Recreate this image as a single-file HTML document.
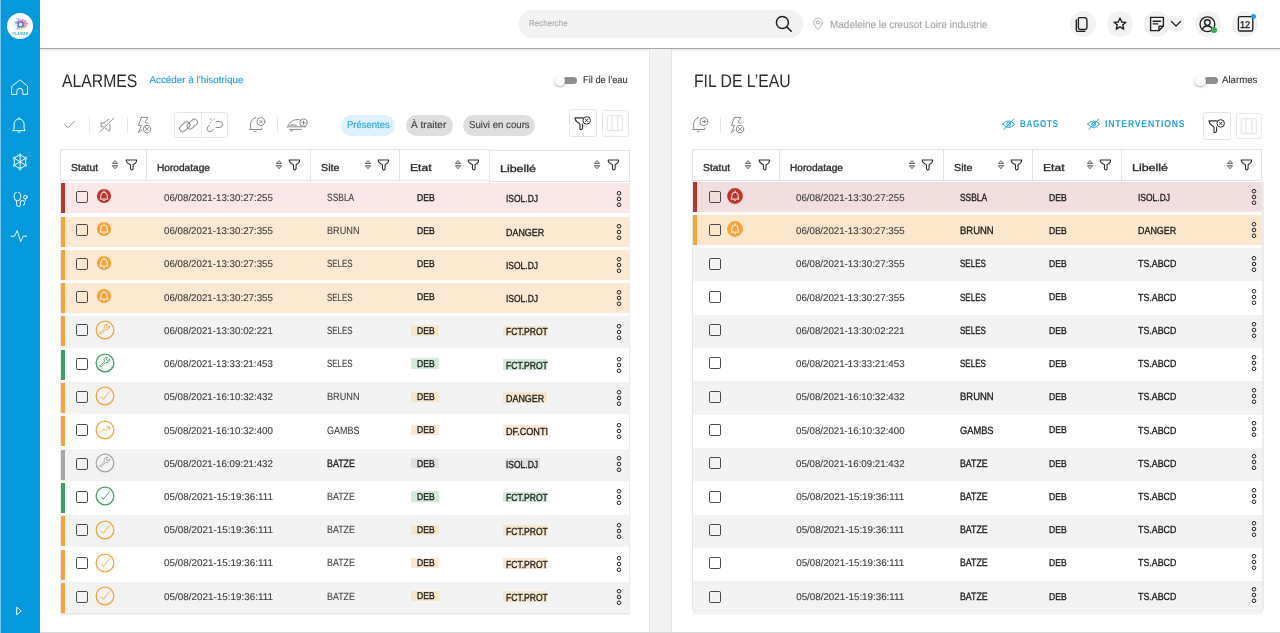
<!DOCTYPE html><html><head><meta charset="utf-8"><style>
*{box-sizing:border-box;margin:0;padding:0}
html,body{width:1280px;height:633px;overflow:hidden;background:#fff;font-family:"Liberation Sans", sans-serif;position:relative}
body{will-change:transform}
.a{position:absolute}
.t{position:absolute;white-space:nowrap;line-height:1;text-rendering:geometricPrecision}
</style></head><body><div class="a" style="left:0.00px;top:0.00px;width:40.40px;height:633.00px;background:#0598da;"></div>
<div class="a" style="left:0.00px;top:0.00px;width:1.00px;height:633.00px;background:#6cc6f0;"></div>
<div class="a" style="left:7.1px;top:13.1px;width:26px;height:26px;border-radius:50%;background:#fff"></div>
<svg class="a" style="left:7px;top:13px" width="26" height="26" viewBox="0 0 26 26"><circle cx="8.07" cy="12.03" r="0.56" fill="#c4c9f2"/><circle cx="11.48" cy="8.64" r="0.57" fill="#7d8ad8"/><circle cx="9.94" cy="10.37" r="0.51" fill="#c4c9f2"/><circle cx="10.81" cy="16.60" r="0.62" fill="#a6c8ee"/><circle cx="8.95" cy="10.32" r="0.63" fill="#c4c9f2"/><circle cx="10.07" cy="10.40" r="0.69" fill="#9aa3e6"/><circle cx="12.51" cy="13.93" r="0.61" fill="#b3b9ee"/><circle cx="10.39" cy="8.72" r="0.69" fill="#7d8ad8"/><circle cx="7.66" cy="11.13" r="0.40" fill="#c4c9f2"/><circle cx="11.19" cy="16.08" r="0.75" fill="#c4c9f2"/><circle cx="12.33" cy="5.67" r="0.49" fill="#a6c8ee"/><circle cx="9.57" cy="8.39" r="0.42" fill="#9aa3e6"/><circle cx="10.04" cy="8.61" r="0.54" fill="#8591dd"/><circle cx="11.62" cy="5.78" r="0.47" fill="#9aa3e6"/><circle cx="12.40" cy="8.84" r="0.74" fill="#c4c9f2"/><circle cx="10.40" cy="12.20" r="0.47" fill="#a6c8ee"/><circle cx="9.58" cy="9.59" r="0.52" fill="#8591dd"/><circle cx="11.84" cy="6.09" r="0.45" fill="#9aa3e6"/><circle cx="11.05" cy="9.98" r="0.68" fill="#c4c9f2"/><circle cx="10.14" cy="15.11" r="0.58" fill="#c4c9f2"/><circle cx="12.20" cy="5.97" r="0.63" fill="#c4c9f2"/><circle cx="11.23" cy="15.08" r="0.40" fill="#b3b9ee"/><circle cx="9.67" cy="5.99" r="0.51" fill="#7d8ad8"/><circle cx="11.71" cy="8.43" r="0.75" fill="#c4c9f2"/><circle cx="8.17" cy="10.05" r="0.75" fill="#9aa3e6"/><circle cx="10.68" cy="13.96" r="0.52" fill="#7d8ad8"/><circle cx="10.79" cy="12.93" r="0.47" fill="#9aa3e6"/><circle cx="10.75" cy="10.43" r="0.53" fill="#8591dd"/><circle cx="6.25" cy="12.22" r="0.69" fill="#c4c9f2"/><circle cx="11.09" cy="14.85" r="0.45" fill="#a6c8ee"/><circle cx="10.78" cy="6.18" r="0.65" fill="#b3b9ee"/><circle cx="10.19" cy="15.49" r="0.47" fill="#7d8ad8"/><circle cx="11.42" cy="5.69" r="0.43" fill="#7d8ad8"/><circle cx="12.54" cy="14.24" r="0.74" fill="#7d8ad8"/><circle cx="8.95" cy="14.94" r="0.55" fill="#8591dd"/><circle cx="11.36" cy="7.36" r="0.46" fill="#7d8ad8"/><circle cx="10.89" cy="9.77" r="0.57" fill="#b3b9ee"/><circle cx="8.29" cy="9.34" r="0.50" fill="#9aa3e6"/><circle cx="12.05" cy="8.32" r="0.42" fill="#9aa3e6"/><circle cx="9.58" cy="12.26" r="0.46" fill="#9aa3e6"/><circle cx="8.34" cy="13.12" r="0.43" fill="#b3b9ee"/><circle cx="10.90" cy="15.05" r="0.63" fill="#8591dd"/><circle cx="8.70" cy="8.94" r="0.61" fill="#b3b9ee"/><circle cx="11.64" cy="7.32" r="0.65" fill="#8591dd"/><circle cx="12.75" cy="8.87" r="0.43" fill="#a6c8ee"/><circle cx="12.03" cy="14.92" r="0.75" fill="#b3b9ee"/><circle cx="15.58" cy="7.25" r="1.36" fill="#f27bbd" opacity="0.72"/><circle cx="15.13" cy="8.28" r="1.15" fill="#f27bbd" opacity="0.72"/><circle cx="14.69" cy="9.32" r="0.94" fill="#f27bbd" opacity="0.72"/><circle cx="18.09" cy="8.34" r="1.27" fill="#f06aa0" opacity="0.72"/><circle cx="17.09" cy="9.05" r="1.06" fill="#f06aa0" opacity="0.72"/><circle cx="16.10" cy="9.76" r="0.85" fill="#f06aa0" opacity="0.72"/><circle cx="19.51" cy="10.54" r="1.27" fill="#ef5f6a" opacity="0.72"/><circle cx="18.23" cy="10.74" r="1.06" fill="#ef5f6a" opacity="0.72"/><circle cx="16.95" cy="10.93" r="0.85" fill="#ef5f6a" opacity="0.72"/><circle cx="18.87" cy="12.97" r="1.10" fill="#f27a5a" opacity="0.72"/><circle cx="17.65" cy="12.59" r="0.89" fill="#f27a5a" opacity="0.72"/><circle cx="16.43" cy="12.21" r="0.68" fill="#f27a5a" opacity="0.72"/><circle cx="17.34" cy="14.41" r="1.10" fill="#3fc0ec" opacity="0.72"/><circle cx="16.42" cy="13.62" r="0.89" fill="#3fc0ec" opacity="0.72"/><circle cx="15.50" cy="12.84" r="0.68" fill="#3fc0ec" opacity="0.72"/><circle cx="15.09" cy="15.51" r="1.19" fill="#f5d53a" opacity="0.72"/><circle cx="14.76" cy="14.44" r="0.98" fill="#f5d53a" opacity="0.72"/><circle cx="14.42" cy="13.37" r="0.76" fill="#f5d53a" opacity="0.72"/><circle cx="13.00" cy="15.25" r="0.94" fill="#f6e05c" opacity="0.72"/><circle cx="13.23" cy="14.16" r="0.72" fill="#f6e05c" opacity="0.72"/><circle cx="13.45" cy="13.07" r="0.51" fill="#f6e05c" opacity="0.72"/><circle cx="13.38" cy="7.34" r="1.02" fill="#e987d0" opacity="0.72"/><circle cx="13.49" cy="8.44" r="0.81" fill="#e987d0" opacity="0.72"/><circle cx="13.61" cy="9.54" r="0.59" fill="#e987d0" opacity="0.72"/><circle cx="13.6" cy="11.4" r="2.6" fill="#d8ecfb" stroke="#4a63d0" stroke-width="1.2"/><text x="13.3" y="21.7" font-family="Liberation Sans" font-weight="700" font-size="3.9" fill="#41b3e8" text-anchor="middle" textLength="15.6" lengthAdjust="spacingAndGlyphs">PLASMA</text></svg>
<svg class="a" style="left:10px;top:77px" width="20" height="20" viewBox="0 0 20 20"><path d="M2 9.2 L9.8 2.9 L17.6 9.2 V17.4 H12.8 V14.3 A3 3 0 0 0 6.8 14.3 V17.4 H2 Z" stroke="#fff" stroke-width="0.95" fill="none" stroke-linejoin="round" stroke-linecap="round"/></svg>
<svg class="a" style="left:11px;top:115px" width="18" height="19" viewBox="0 0 18 19"><path d="M2 15.6 H14.2 L13.1 13.9 V9.3 A5 5.4 0 0 0 3.1 9.3 V13.9 Z" stroke="#fff" stroke-width="0.95" fill="none" stroke-linejoin="round" stroke-linecap="round"/><path d="M8.1 2.5 V3.9" stroke="#fff" stroke-width="0.95" fill="none" stroke-linejoin="round" stroke-linecap="round"/><path d="M6.9 17 Q8.1 18.2 9.3 17" stroke="#fff" stroke-width="0.95" fill="none" stroke-linejoin="round" stroke-linecap="round"/></svg>
<svg class="a" style="left:12px;top:152px" width="17" height="20" viewBox="0 0 17 20"><path d="M8.15 3.10 L13.70 6.10 L13.70 13.40 L8.15 16.80 L2.30 13.40 L2.30 6.10 Z" stroke="#fff" stroke-width="0.95" fill="none" stroke-linejoin="round" stroke-linecap="round"/><path d="M8.15 3.1 L8.15 16.8 M2.3 6.1 L13.7 13.4 M13.7 6.1 L2.3 13.4" stroke="#fff" stroke-width="0.95" fill="none" stroke-linejoin="round" stroke-linecap="round"/><circle cx="8.15" cy="3.1" r="1.05" fill="#0598da" stroke="#fff" stroke-width="0.85"/><circle cx="13.7" cy="6.1" r="1.05" fill="#0598da" stroke="#fff" stroke-width="0.85"/><circle cx="13.7" cy="13.4" r="1.05" fill="#0598da" stroke="#fff" stroke-width="0.85"/><circle cx="8.15" cy="16.8" r="1.05" fill="#0598da" stroke="#fff" stroke-width="0.85"/><circle cx="2.3" cy="13.4" r="1.05" fill="#0598da" stroke="#fff" stroke-width="0.85"/><circle cx="2.3" cy="6.1" r="1.05" fill="#0598da" stroke="#fff" stroke-width="0.85"/><circle cx="8.15" cy="9.75" r="0.9" fill="#fff"/></svg>
<svg class="a" style="left:12px;top:190px" width="17" height="18" viewBox="0 0 17 18"><path d="M4.4 2.4 Q2.2 2.8 2.2 5.4 V7.6 Q2.2 10.8 5.5 10.8 Q8.6 10.8 8.6 7.6 V5.4 Q8.6 2.8 6.6 2.4" stroke="#fff" stroke-width="0.95" fill="none" stroke-linejoin="round" stroke-linecap="round"/><path d="M4.6 10.8 V14.6 Q4.6 16.6 6.6 16.6 Q8.4 16.6 8.4 14.6 V12 Q8.4 10.4 10.4 10.4 Q12.6 10.4 12.6 12.6 V13.5 Q12.6 15.2 11.3 15.2" stroke="#fff" stroke-width="0.95" fill="none" stroke-linejoin="round" stroke-linecap="round"/><circle cx="13.4" cy="7.2" r="1.8" stroke="#fff" stroke-width="0.95" fill="none" stroke-linejoin="round" stroke-linecap="round"/><path d="M13.4 9 V10.5" stroke="#fff" stroke-width="0.95" fill="none" stroke-linejoin="round" stroke-linecap="round"/></svg>
<svg class="a" style="left:10px;top:229px" width="18" height="14" viewBox="0 0 18 14"><path d="M1 7.2 H4.6 L7.2 1.6 L10.6 12.6 L13.2 7.2 H16.6" stroke="#fff" stroke-width="0.95" fill="none" stroke-linejoin="round" stroke-linecap="round"/></svg>
<svg class="a" style="left:14px;top:605px" width="10" height="12" viewBox="0 0 10 12"><path d="M3 2.4 L7.3 6 L3 9.6 Z" stroke="#fff" stroke-width="0.95" fill="none" stroke-linejoin="round" stroke-linecap="round"/></svg>
<div class="a" style="left:40.00px;top:48.00px;width:1240.00px;height:1.00px;background:#a5a5a5;"></div>
<div class="a" style="left:40.00px;top:49.00px;width:1240.00px;height:3.00px;background:linear-gradient(rgba(0,0,0,0.09),rgba(0,0,0,0));"></div>
<div class="a" style="left:518.5px;top:10.2px;width:284.5px;height:27.3px;border-radius:13.6px;background:#f3f3f3;box-shadow:0 0.5px 1px rgba(0,0,0,0.10)"></div>
<div class="t" style="left:529.30px;top:19.00px;font-size:8.6px;color:#a9a9a9;-webkit-text-stroke:0.12px #a9a9a9;transform:scaleX(0.9335);transform-origin:0 0;">Recherche</div>
<svg class="a" style="left:774px;top:14px" width="20" height="20" viewBox="0 0 20 20"><circle cx="8.4" cy="8.4" r="6.0" fill="none" stroke="#1e1e1e" stroke-width="1.45"/><path d="M12.7 12.7 L17.2 17.2" stroke="#1e1e1e" stroke-width="1.6" stroke-linecap="round"/></svg>
<svg class="a" style="left:812px;top:17px" width="12" height="14" viewBox="0 0 12 14"><path d="M6 12.6 C3 9.2 1.8 7.3 1.8 5.3 A4.2 4.2 0 0 1 10.2 5.3 C10.2 7.3 9 9.2 6 12.6 Z" fill="none" stroke="#adadad" stroke-width="0.95"/><circle cx="6" cy="5.3" r="1.7" fill="none" stroke="#adadad" stroke-width="0.95"/></svg>
<div class="t" style="left:830.00px;top:20.00px;font-size:10.6px;color:#a6a6a6;-webkit-text-stroke:0.12px #a6a6a6;transform:scaleX(0.9412);transform-origin:0 0;">Madeleine le creusot Loire industrie</div>
<div class="a" style="left:1069.8px;top:11px;width:26px;height:26px;border-radius:50%;background:#f2f2f2"></div>
<div class="a" style="left:1107.2px;top:11px;width:26px;height:26px;border-radius:50%;background:#f2f2f2"></div>
<div class="a" style="left:1144.3px;top:11px;width:26px;height:26px;border-radius:50%;background:#f2f2f2"></div>
<div class="a" style="left:1194.5px;top:11px;width:26px;height:26px;border-radius:50%;background:#f2f2f2"></div>
<div class="a" style="left:1231.8px;top:11px;width:26px;height:26px;border-radius:50%;background:#f2f2f2"></div>
<div class="a" style="left:1167.5px;top:15.5px;width:16px;height:16px;border-radius:50%;background:#f2f2f2"></div>
<svg class="a" style="left:1073px;top:15px" width="19" height="18" viewBox="0 0 19 18"><path d="M6 2.6 H11.4 Q13.9 2.6 13.9 5.1 V12.8 Q13.9 14.5 12.2 14.5 H7 Q5.4 14.5 5.4 12.8 V3.2" stroke="#1e1e1e" stroke-width="1.35" fill="none" stroke-linejoin="round" stroke-linecap="round"/><path d="M3.3 5 V14.9 Q3.3 16.4 4.8 16.4 H11.8" stroke="#1e1e1e" stroke-width="1.35" fill="none" stroke-linejoin="round" stroke-linecap="round"/></svg>
<svg class="a" style="left:1111.2px;top:15px" width="18" height="18" viewBox="0 0 18 18"><path d="M9 3 L10.7 7 L15 7.3 L11.7 10 L12.8 14.2 L9 11.9 L5.2 14.2 L6.3 10 L3 7.3 L7.3 7 Z" stroke="#1e1e1e" stroke-width="1.35" fill="none" stroke-linejoin="round" stroke-linecap="round"/></svg>
<svg class="a" style="left:1148px;top:15px" width="18" height="18" viewBox="0 0 18 18"><path d="M2.6 2.4 H15.4 V11.2 L11 15.6 H2.6 Z" stroke="#1e1e1e" stroke-width="1.35" fill="none" stroke-linejoin="round" stroke-linecap="round"/><path d="M15.4 11.2 H11 V15.6" stroke="#1e1e1e" stroke-width="1.35" fill="none" stroke-linejoin="round" stroke-linecap="round"/><path d="M5.2 6.2 H12.6 M5.2 8.8 H9.8" stroke="#1e1e1e" stroke-width="1.35" fill="none" stroke-linejoin="round" stroke-linecap="round"/></svg>
<svg class="a" style="left:1168.5px;top:18px" width="14" height="12" viewBox="0 0 14 12"><path d="M2.5 3.5 L7 8 L11.5 3.5" stroke="#1e1e1e" stroke-width="1.2" fill="none" stroke-linecap="round" stroke-linejoin="round"/></svg>
<svg class="a" style="left:1198px;top:15px" width="19" height="19" viewBox="0 0 19 19"><circle cx="9.4" cy="9.2" r="7.4" stroke="#1e1e1e" stroke-width="1.35" fill="none" stroke-linejoin="round" stroke-linecap="round"/><circle cx="9.4" cy="7.5" r="2.8" stroke="#1e1e1e" stroke-width="1.35" fill="none" stroke-linejoin="round" stroke-linecap="round"/><path d="M4.3 14.4 Q5.5 11 9.4 11 Q13.3 11 14.5 14.4" stroke="#1e1e1e" stroke-width="1.35" fill="none" stroke-linejoin="round" stroke-linecap="round"/></svg>
<div class="a" style="left:1211px;top:27.2px;width:6.2px;height:6.2px;border-radius:50%;background:#3da85a"></div>
<svg class="a" style="left:1236px;top:14px" width="19" height="19" viewBox="0 0 19 19"><rect x="2.4" y="2.6" width="14.4" height="14.4" rx="1.6" stroke="#1e1e1e" stroke-width="1.35" fill="none" stroke-linejoin="round" stroke-linecap="round"/></svg>
<div class="t" style="left:1239.60px;top:21.00px;font-size:9.8px;color:#1e1e1e;-webkit-text-stroke:0.35px #1e1e1e;transform:scaleX(0.9352);transform-origin:0 0;">12</div>
<div class="a" style="left:1250.5px;top:13.5px;width:5.5px;height:5.5px;border-radius:50%;background:#1c9fe3"></div>
<div class="a" style="left:649.00px;top:49.00px;width:23.00px;height:584.00px;background:#f3f3f3;border-left:1px solid #e6e6e6;border-right:1px solid #e6e6e6"></div>
<div class="a" style="left:40.00px;top:632.00px;width:1240.00px;height:1.00px;background:#d9d9d9;"></div>
<div class="t" style="left:62.30px;top:72.00px;font-size:18.2px;color:#2b2b2b;transform:scaleX(0.8665);transform-origin:0 0;">ALARMES</div>
<div class="t" style="left:149.40px;top:76.00px;font-size:9.9px;color:#21a0dc;-webkit-text-stroke:0.12px #21a0dc;">Accéder à l'hisotrique</div>
<div class="t" style="left:693.90px;top:72.00px;font-size:18.2px;color:#2b2b2b;transform:scaleX(0.8655);transform-origin:0 0;">FIL DE L’EAU</div>
<div class="a" style="left:563.2px;top:77.3px;width:14.0px;height:7px;border-radius:3.5px;background:#8f8f8f"></div>
<div class="a" style="left:554.9px;top:75.5px;width:10.6px;height:10.6px;border-radius:50%;background:#fff;box-shadow:0 1px 2.5px rgba(0,0,0,0.35)"></div>
<div class="t" style="left:582.70px;top:76.00px;font-size:9.9px;color:#333;-webkit-text-stroke:0.12px #333;transform:scaleX(0.9422);transform-origin:0 0;">Fil de l'eau</div>
<div class="a" style="left:1203.5px;top:77.3px;width:14.0px;height:7px;border-radius:3.5px;background:#8f8f8f"></div>
<div class="a" style="left:1195.2px;top:75.5px;width:10.6px;height:10.6px;border-radius:50%;background:#fff;box-shadow:0 1px 2.5px rgba(0,0,0,0.35)"></div>
<div class="t" style="left:1222.30px;top:76.00px;font-size:9.9px;color:#333;-webkit-text-stroke:0.12px #333;transform:scaleX(0.9785);transform-origin:0 0;">Alarmes</div>
<svg class="a" style="left:63px;top:119px" width="13" height="11" viewBox="0 0 13 11"><path d="M1.8 5.6 L4.8 8.8 L11.4 2.2" stroke="#8c8c8c" stroke-width="1" fill="none" stroke-linejoin="round" stroke-linecap="round"/></svg>
<div class="a" style="left:88.50px;top:117.40px;width:1.00px;height:15.40px;background:#e4e4e4;"></div>
<svg class="a" style="left:99px;top:116px" width="17" height="17" viewBox="0 0 17 17"><path d="M2.2 7 H4.6 Q7.5 4.6 10 3.3 M2.2 7 V10.8 H4.2 M6.2 12.2 Q8.5 14 10.9 15 V8.4" stroke="#8c8c8c" stroke-width="1" fill="none" stroke-linejoin="round" stroke-linecap="round"/><path d="M1.2 15.5 L14.75 2.1" stroke="#8c8c8c" stroke-width="1" fill="none" stroke-linejoin="round" stroke-linecap="round"/></svg>
<div class="a" style="left:126.70px;top:117.40px;width:1.00px;height:15.40px;background:#e4e4e4;"></div>
<svg class="a" style="left:137px;top:116px" width="16" height="18" viewBox="0 0 16 18"><path d="M4.4 1.4 H11 L7.9 6.1 L11.2 7.3 M4.4 1.4 L1.4 9.4 H4.4 L1.4 16.6 L4.9 13.8" stroke="#8c8c8c" stroke-width="1" fill="none" stroke-linejoin="round" stroke-linecap="round"/><circle cx="10" cy="13.1" r="3.7" stroke="#8c8c8c" stroke-width="1" fill="none" stroke-linejoin="round" stroke-linecap="round"/><path d="M8.2 11.3 L11.8 14.9 M11.8 11.3 L8.2 14.9" stroke="#8c8c8c" stroke-width="1" fill="none" stroke-linejoin="round" stroke-linecap="round"/></svg>
<div class="a" style="left:174.4px;top:112.1px;width:53.2px;height:26.3px;border:1px solid #e6e6e6;border-radius:3px"></div>
<div class="a" style="left:200.60px;top:112.50px;width:1.00px;height:25.60px;background:#e6e6e6;"></div>
<svg class="a" style="left:177.5px;top:114.5px" width="22" height="20" viewBox="0 0 22 20"><g transform="rotate(-42 11 10)"><rect x="0.8" y="5.4" width="11.6" height="6.2" rx="3.1" stroke="#8c8c8c" stroke-width="1" fill="none" stroke-linejoin="round" stroke-linecap="round"/><rect x="8.2" y="8.4" width="11.6" height="6.2" rx="3.1" stroke="#8c8c8c" stroke-width="1" fill="none" stroke-linejoin="round" stroke-linecap="round"/></g></svg>
<svg class="a" style="left:204px;top:116px" width="21" height="18" viewBox="0 0 21 18"><path d="M12 5.4 H15 Q18.7 5.4 18.7 8.4 Q18.7 11.5 15 11.5 H12" stroke="#8c8c8c" stroke-width="1" fill="none" stroke-linejoin="round" stroke-linecap="round"/><path d="M5.9 8.7 Q2.8 10.5 3 13.4 Q3.6 16 6.5 15.6 Q8.2 15.3 9.7 13.2" stroke="#8c8c8c" stroke-width="1" fill="none" stroke-linejoin="round" stroke-linecap="round"/><path d="M6 2.5 L8.2 4.7 M10.2 2.8 V3.2 M6.6 6.4 L6.2 6.6" stroke="#8c8c8c" stroke-width="1" fill="none" stroke-linejoin="round" stroke-linecap="round"/></svg>
<svg class="a" style="left:248px;top:116px" width="18" height="18" viewBox="0 0 18 18"><path d="M7.2 1.2 V2.2 Q3.3 2.8 2.6 7.6 V12.6 L1.4 13.5 H13.7 V11.9" stroke="#8c8c8c" stroke-width="1" fill="none" stroke-linejoin="round" stroke-linecap="round"/><path d="M6.1 15.4 Q7.2 16.6 8.3 15.4" stroke="#8c8c8c" stroke-width="1" fill="none" stroke-linejoin="round" stroke-linecap="round"/><circle cx="12.9" cy="5.6" r="4.0" stroke="#8c8c8c" stroke-width="1" fill="none" stroke-linejoin="round" stroke-linecap="round"/><path d="M11.5 4.2 L14.3 7 M14.3 4.2 L11.5 7" stroke="#8c8c8c" stroke-width="1" fill="none" stroke-linejoin="round" stroke-linecap="round"/></svg>
<div class="a" style="left:276.50px;top:117.40px;width:1.00px;height:15.40px;background:#e4e4e4;"></div>
<svg class="a" style="left:285px;top:116px" width="23" height="17" viewBox="0 0 23 17"><path d="M2.6 11 Q3.6 6.8 7.5 4.8 Q10.5 3.3 13.4 3.5 Q15.5 3.7 16.3 5" stroke="#8c8c8c" stroke-width="1" fill="none" stroke-linejoin="round" stroke-linecap="round"/><path d="M2.4 10.8 H20.6 M5 9.1 H11.3 M5 13.4 H16.5" stroke="#8c8c8c" stroke-width="1" fill="none" stroke-linejoin="round" stroke-linecap="round"/><path d="M5 13.4 Q5.3 15 6.6 15 Q8 15 8.2 13.4" stroke="#8c8c8c" stroke-width="1" fill="none" stroke-linejoin="round" stroke-linecap="round"/><circle cx="18.5" cy="6.7" r="3.7" stroke="#8c8c8c" stroke-width="1" fill="none" stroke-linejoin="round" stroke-linecap="round"/><path d="M18.5 5 V8.4 M16.8 6.7 H20.2" stroke="#8c8c8c" stroke-width="1" fill="none" stroke-linejoin="round" stroke-linecap="round"/></svg>
<div class="a" style="left:341.2px;top:114.6px;width:54.1px;height:21px;border-radius:10.5px;background:#ddf2fc"></div>
<div class="t" style="left:347.30px;top:121.00px;font-size:10px;color:#2aa6df;-webkit-text-stroke:0.12px #2aa6df;transform:scaleX(0.9482);transform-origin:0 0;">Présentes</div>
<div class="a" style="left:405.7px;top:114.6px;width:46.9px;height:21px;border-radius:10.5px;background:#dedede"></div>
<div class="t" style="left:411.30px;top:121.00px;font-size:10px;color:#3c3c3c;-webkit-text-stroke:0.12px #3c3c3c;transform:scaleX(1.0081);transform-origin:0 0;">À traiter</div>
<div class="a" style="left:463.4px;top:114.6px;width:71.8px;height:21px;border-radius:10.5px;background:#dedede"></div>
<div class="t" style="left:468.70px;top:121.00px;font-size:10px;color:#3c3c3c;-webkit-text-stroke:0.12px #3c3c3c;transform:scaleX(0.9664);transform-origin:0 0;">Suivi en cours</div>
<div class="a" style="left:569.4px;top:109.4px;width:27.7px;height:27.3px;border:1px solid #e4e4e4;border-radius:2.5px;background:#fff"></div>
<svg class="a" style="left:573.4px;top:113.4px" width="20" height="20" viewBox="0 0 20 20"><path d="M2 4.9 H9.9 M2 4.9 Q2.2 7.8 4.6 9.2 Q6.9 10.3 7 11.4 V15.7 Q7.1 16.8 8.3 16.5 Q9.6 16.1 9.6 14.8 V11" stroke="#2b2b2b" stroke-width="1.1" fill="none" stroke-linejoin="round" stroke-linecap="round"/><circle cx="13.7" cy="7.4" r="3.75" stroke="#2b2b2b" stroke-width="1" fill="#fff"/><path d="M12.1 5.8 L15.3 9 M15.3 5.8 L12.1 9" stroke="#2b2b2b" stroke-width="0.9"/></svg>
<div class="a" style="left:602.4px;top:110px;width:26.4px;height:26.7px;border:1px solid #e8e8e8;border-radius:2.5px;background:#fff"></div>
<svg class="a" style="left:606.4px;top:114px" width="19" height="19" viewBox="0 0 19 19"><rect x="1.2" y="1.5" width="15.2" height="15.2" rx="2" fill="none" stroke="#e6e6e6" stroke-width="1.2"/><path d="M5.9 1.5 V16.7 M11.9 1.5 V16.7" stroke="#e6e6e6" stroke-width="1.2"/></svg>
<svg class="a" style="left:691px;top:116px" width="18" height="18" viewBox="0 0 18 18"><path d="M7.2 1.2 V2.2 Q3.3 2.8 2.6 7.6 V12.6 L1.4 13.5 H13.7 V11.9" stroke="#8c8c8c" stroke-width="1" fill="none" stroke-linejoin="round" stroke-linecap="round"/><path d="M6.1 15.4 Q7.2 16.6 8.3 15.4" stroke="#8c8c8c" stroke-width="1" fill="none" stroke-linejoin="round" stroke-linecap="round"/><circle cx="12.9" cy="5.6" r="4.0" stroke="#8c8c8c" stroke-width="1" fill="none" stroke-linejoin="round" stroke-linecap="round"/><path d="M11.2 5.6 H14.6 M13.2 4.2 L14.6 5.6 L13.2 7" stroke="#8c8c8c" stroke-width="1" fill="none" stroke-linejoin="round" stroke-linecap="round"/></svg>
<div class="a" style="left:719.50px;top:117.40px;width:1.00px;height:15.40px;background:#e4e4e4;"></div>
<svg class="a" style="left:730px;top:116px" width="16" height="18" viewBox="0 0 16 18"><path d="M4.4 1.4 H11 L7.9 6.1 L11.2 7.3 M4.4 1.4 L1.4 9.4 H4.4 L1.4 16.6 L4.9 13.8" stroke="#8c8c8c" stroke-width="1" fill="none" stroke-linejoin="round" stroke-linecap="round"/><circle cx="10" cy="13.1" r="3.7" stroke="#8c8c8c" stroke-width="1" fill="none" stroke-linejoin="round" stroke-linecap="round"/><path d="M8.2 11.3 L11.8 14.9 M11.8 11.3 L8.2 14.9" stroke="#8c8c8c" stroke-width="1" fill="none" stroke-linejoin="round" stroke-linecap="round"/></svg>
<svg class="a" style="left:1001.6px;top:118.2px" width="15" height="12" viewBox="0 0 15 12"><path d="M0.8 6.2 Q6.5 -0.6 12.6 6.2 Q6.5 13 0.8 6.2 Z" stroke="#27a3dd" stroke-width="1" fill="none" stroke-linecap="round" stroke-linejoin="round"/><circle cx="6.7" cy="6.2" r="1.9" stroke="#27a3dd" stroke-width="1" fill="none" stroke-linecap="round" stroke-linejoin="round"/><path d="M2 11.4 L11.8 1" stroke="#27a3dd" stroke-width="1" fill="none" stroke-linecap="round" stroke-linejoin="round"/></svg>
<div class="t" style="left:1019.90px;top:120.00px;font-size:9.9px;color:#27a3dd;font-weight:700;letter-spacing:0.9px;transform:scaleX(0.8135);transform-origin:0 0;">BAGOTS</div>
<svg class="a" style="left:1086.6px;top:118.2px" width="15" height="12" viewBox="0 0 15 12"><path d="M0.8 6.2 Q6.5 -0.6 12.6 6.2 Q6.5 13 0.8 6.2 Z" stroke="#27a3dd" stroke-width="1" fill="none" stroke-linecap="round" stroke-linejoin="round"/><circle cx="6.7" cy="6.2" r="1.9" stroke="#27a3dd" stroke-width="1" fill="none" stroke-linecap="round" stroke-linejoin="round"/><path d="M2 11.4 L11.8 1" stroke="#27a3dd" stroke-width="1" fill="none" stroke-linecap="round" stroke-linejoin="round"/></svg>
<div class="t" style="left:1104.80px;top:120.00px;font-size:9.9px;color:#27a3dd;font-weight:700;letter-spacing:0.9px;transform:scaleX(0.8774);transform-origin:0 0;">INTERVENTIONS</div>
<div class="a" style="left:1203.3px;top:112.3px;width:27.7px;height:27.3px;border:1px solid #e4e4e4;border-radius:2.5px;background:#fff"></div>
<svg class="a" style="left:1207.3px;top:116.3px" width="20" height="20" viewBox="0 0 20 20"><path d="M2 4.9 H9.9 M2 4.9 Q2.2 7.8 4.6 9.2 Q6.9 10.3 7 11.4 V15.7 Q7.1 16.8 8.3 16.5 Q9.6 16.1 9.6 14.8 V11" stroke="#2b2b2b" stroke-width="1.1" fill="none" stroke-linejoin="round" stroke-linecap="round"/><circle cx="13.7" cy="7.4" r="3.75" stroke="#2b2b2b" stroke-width="1" fill="#fff"/><path d="M12.1 5.8 L15.3 9 M15.3 5.8 L12.1 9" stroke="#2b2b2b" stroke-width="0.9"/></svg>
<div class="a" style="left:1235.6px;top:112.6px;width:26.4px;height:26.7px;border:1px solid #e8e8e8;border-radius:2.5px;background:#fff"></div>
<svg class="a" style="left:1239.6px;top:116.6px" width="19" height="19" viewBox="0 0 19 19"><rect x="1.2" y="1.5" width="15.2" height="15.2" rx="2" fill="none" stroke="#e6e6e6" stroke-width="1.2"/><path d="M5.9 1.5 V16.7 M11.9 1.5 V16.7" stroke="#e6e6e6" stroke-width="1.2"/></svg>
<div class="a" style="left:60.20px;top:148.70px;width:87.10px;height:32.10px;background:#fff;border:1px solid #e4e4e4"></div>
<div class="a" style="left:146.30px;top:148.70px;width:164.80px;height:32.10px;background:#fff;border:1px solid #e4e4e4"></div>
<div class="a" style="left:310.10px;top:148.70px;width:90.10px;height:32.10px;background:#fff;border:1px solid #e4e4e4"></div>
<div class="a" style="left:399.20px;top:148.70px;width:90.80px;height:32.10px;background:#fff;border:1px solid #e4e4e4"></div>
<div class="a" style="left:489.00px;top:149.70px;width:140.70px;height:32.10px;background:#fff;border:1px solid #e4e4e4"></div>
<div class="t" style="left:71.30px;top:164.00px;font-size:10px;color:#2e2e2e;-webkit-text-stroke:0.35px #2e2e2e;transform:scaleX(1.0367);transform-origin:0 0;">Statut</div>
<svg class="a" style="left:111.00000000000001px;top:158.8px" width="8" height="12" viewBox="0 0 8 12"><path d="M1.3 4.5 L4 1.5 L6.7 4.5 Z M1.3 6.6 L4 9.8 L6.7 6.6 Z" stroke="#444" stroke-width="0.75" fill="#d6d6d6" stroke-linejoin="round"/></svg>
<svg class="a" style="left:124.5px;top:157.8px" width="13" height="13" viewBox="0 0 13 13"><path d="M1.2 2 H11.6 Q11.9 4.7 8.1 6.7 V10.7 Q7.9 11.8 6.8 12 Q5.6 11.8 5.5 10.7 V6.7 Q1 4.7 1.2 2 Z" stroke="#2e2e2e" stroke-width="1.1" fill="none" stroke-linejoin="round"/></svg>
<div class="t" style="left:157.40px;top:164.00px;font-size:10px;color:#2e2e2e;-webkit-text-stroke:0.35px #2e2e2e;transform:scaleX(1.0141);transform-origin:0 0;">Horodatage</div>
<svg class="a" style="left:274.8px;top:158.8px" width="8" height="12" viewBox="0 0 8 12"><path d="M1.3 4.5 L4 1.5 L6.7 4.5 Z M1.3 6.6 L4 9.8 L6.7 6.6 Z" stroke="#444" stroke-width="0.75" fill="#d6d6d6" stroke-linejoin="round"/></svg>
<svg class="a" style="left:288.3px;top:157.8px" width="13" height="13" viewBox="0 0 13 13"><path d="M1.2 2 H11.6 Q11.9 4.7 8.1 6.7 V10.7 Q7.9 11.8 6.8 12 Q5.6 11.8 5.5 10.7 V6.7 Q1 4.7 1.2 2 Z" stroke="#2e2e2e" stroke-width="1.1" fill="none" stroke-linejoin="round"/></svg>
<div class="t" style="left:321.20px;top:164.00px;font-size:10px;color:#2e2e2e;-webkit-text-stroke:0.35px #2e2e2e;transform:scaleX(1.0734);transform-origin:0 0;">Site</div>
<svg class="a" style="left:363.9px;top:158.8px" width="8" height="12" viewBox="0 0 8 12"><path d="M1.3 4.5 L4 1.5 L6.7 4.5 Z M1.3 6.6 L4 9.8 L6.7 6.6 Z" stroke="#444" stroke-width="0.75" fill="#d6d6d6" stroke-linejoin="round"/></svg>
<svg class="a" style="left:377.4px;top:157.8px" width="13" height="13" viewBox="0 0 13 13"><path d="M1.2 2 H11.6 Q11.9 4.7 8.1 6.7 V10.7 Q7.9 11.8 6.8 12 Q5.6 11.8 5.5 10.7 V6.7 Q1 4.7 1.2 2 Z" stroke="#2e2e2e" stroke-width="1.1" fill="none" stroke-linejoin="round"/></svg>
<div class="t" style="left:410.30px;top:164.00px;font-size:10px;color:#2e2e2e;-webkit-text-stroke:0.35px #2e2e2e;transform:scaleX(1.2081);transform-origin:0 0;">Etat</div>
<svg class="a" style="left:453.7px;top:158.8px" width="8" height="12" viewBox="0 0 8 12"><path d="M1.3 4.5 L4 1.5 L6.7 4.5 Z M1.3 6.6 L4 9.8 L6.7 6.6 Z" stroke="#444" stroke-width="0.75" fill="#d6d6d6" stroke-linejoin="round"/></svg>
<svg class="a" style="left:467.2px;top:157.8px" width="13" height="13" viewBox="0 0 13 13"><path d="M1.2 2 H11.6 Q11.9 4.7 8.1 6.7 V10.7 Q7.9 11.8 6.8 12 Q5.6 11.8 5.5 10.7 V6.7 Q1 4.7 1.2 2 Z" stroke="#2e2e2e" stroke-width="1.1" fill="none" stroke-linejoin="round"/></svg>
<div class="t" style="left:500.10px;top:165.00px;font-size:10px;color:#2e2e2e;-webkit-text-stroke:0.35px #2e2e2e;transform:scaleX(1.2454);transform-origin:0 0;">Libellé</div>
<svg class="a" style="left:593.4000000000001px;top:158.8px" width="8" height="12" viewBox="0 0 8 12"><path d="M1.3 4.5 L4 1.5 L6.7 4.5 Z M1.3 6.6 L4 9.8 L6.7 6.6 Z" stroke="#444" stroke-width="0.75" fill="#d6d6d6" stroke-linejoin="round"/></svg>
<svg class="a" style="left:606.9000000000001px;top:157.8px" width="13" height="13" viewBox="0 0 13 13"><path d="M1.2 2 H11.6 Q11.9 4.7 8.1 6.7 V10.7 Q7.9 11.8 6.8 12 Q5.6 11.8 5.5 10.7 V6.7 Q1 4.7 1.2 2 Z" stroke="#2e2e2e" stroke-width="1.1" fill="none" stroke-linejoin="round"/></svg>
<div class="a" style="left:692.30px;top:148.60px;width:88.00px;height:32.20px;background:#fff;border:1px solid #e4e4e4"></div>
<div class="a" style="left:779.30px;top:148.60px;width:164.90px;height:32.20px;background:#fff;border:1px solid #e4e4e4"></div>
<div class="a" style="left:943.20px;top:148.60px;width:89.90px;height:32.20px;background:#fff;border:1px solid #e4e4e4"></div>
<div class="a" style="left:1032.10px;top:148.60px;width:90.00px;height:32.20px;background:#fff;border:1px solid #e4e4e4"></div>
<div class="a" style="left:1121.10px;top:148.60px;width:141.20px;height:32.20px;background:#fff;border:1px solid #e4e4e4"></div>
<div class="t" style="left:703.40px;top:164.00px;font-size:10px;color:#2e2e2e;-webkit-text-stroke:0.35px #2e2e2e;transform:scaleX(1.0367);transform-origin:0 0;">Statut</div>
<svg class="a" style="left:744.0px;top:158.8px" width="8" height="12" viewBox="0 0 8 12"><path d="M1.3 4.5 L4 1.5 L6.7 4.5 Z M1.3 6.6 L4 9.8 L6.7 6.6 Z" stroke="#444" stroke-width="0.75" fill="#d6d6d6" stroke-linejoin="round"/></svg>
<svg class="a" style="left:757.5px;top:157.8px" width="13" height="13" viewBox="0 0 13 13"><path d="M1.2 2 H11.6 Q11.9 4.7 8.1 6.7 V10.7 Q7.9 11.8 6.8 12 Q5.6 11.8 5.5 10.7 V6.7 Q1 4.7 1.2 2 Z" stroke="#2e2e2e" stroke-width="1.1" fill="none" stroke-linejoin="round"/></svg>
<div class="t" style="left:790.40px;top:164.00px;font-size:10px;color:#2e2e2e;-webkit-text-stroke:0.35px #2e2e2e;transform:scaleX(1.0141);transform-origin:0 0;">Horodatage</div>
<svg class="a" style="left:907.9000000000001px;top:158.8px" width="8" height="12" viewBox="0 0 8 12"><path d="M1.3 4.5 L4 1.5 L6.7 4.5 Z M1.3 6.6 L4 9.8 L6.7 6.6 Z" stroke="#444" stroke-width="0.75" fill="#d6d6d6" stroke-linejoin="round"/></svg>
<svg class="a" style="left:921.4000000000001px;top:157.8px" width="13" height="13" viewBox="0 0 13 13"><path d="M1.2 2 H11.6 Q11.9 4.7 8.1 6.7 V10.7 Q7.9 11.8 6.8 12 Q5.6 11.8 5.5 10.7 V6.7 Q1 4.7 1.2 2 Z" stroke="#2e2e2e" stroke-width="1.1" fill="none" stroke-linejoin="round"/></svg>
<div class="t" style="left:954.30px;top:164.00px;font-size:10px;color:#2e2e2e;-webkit-text-stroke:0.35px #2e2e2e;transform:scaleX(1.0734);transform-origin:0 0;">Site</div>
<svg class="a" style="left:996.8px;top:158.8px" width="8" height="12" viewBox="0 0 8 12"><path d="M1.3 4.5 L4 1.5 L6.7 4.5 Z M1.3 6.6 L4 9.8 L6.7 6.6 Z" stroke="#444" stroke-width="0.75" fill="#d6d6d6" stroke-linejoin="round"/></svg>
<svg class="a" style="left:1010.3px;top:157.8px" width="13" height="13" viewBox="0 0 13 13"><path d="M1.2 2 H11.6 Q11.9 4.7 8.1 6.7 V10.7 Q7.9 11.8 6.8 12 Q5.6 11.8 5.5 10.7 V6.7 Q1 4.7 1.2 2 Z" stroke="#2e2e2e" stroke-width="1.1" fill="none" stroke-linejoin="round"/></svg>
<div class="t" style="left:1043.20px;top:164.00px;font-size:10px;color:#2e2e2e;-webkit-text-stroke:0.35px #2e2e2e;transform:scaleX(1.2081);transform-origin:0 0;">Etat</div>
<svg class="a" style="left:1085.8px;top:158.8px" width="8" height="12" viewBox="0 0 8 12"><path d="M1.3 4.5 L4 1.5 L6.7 4.5 Z M1.3 6.6 L4 9.8 L6.7 6.6 Z" stroke="#444" stroke-width="0.75" fill="#d6d6d6" stroke-linejoin="round"/></svg>
<svg class="a" style="left:1099.3px;top:157.8px" width="13" height="13" viewBox="0 0 13 13"><path d="M1.2 2 H11.6 Q11.9 4.7 8.1 6.7 V10.7 Q7.9 11.8 6.8 12 Q5.6 11.8 5.5 10.7 V6.7 Q1 4.7 1.2 2 Z" stroke="#2e2e2e" stroke-width="1.1" fill="none" stroke-linejoin="round"/></svg>
<div class="t" style="left:1132.20px;top:164.00px;font-size:10px;color:#2e2e2e;-webkit-text-stroke:0.35px #2e2e2e;transform:scaleX(1.2454);transform-origin:0 0;">Libellé</div>
<svg class="a" style="left:1226.0px;top:158.8px" width="8" height="12" viewBox="0 0 8 12"><path d="M1.3 4.5 L4 1.5 L6.7 4.5 Z M1.3 6.6 L4 9.8 L6.7 6.6 Z" stroke="#444" stroke-width="0.75" fill="#d6d6d6" stroke-linejoin="round"/></svg>
<svg class="a" style="left:1239.5px;top:157.8px" width="13" height="13" viewBox="0 0 13 13"><path d="M1.2 2 H11.6 Q11.9 4.7 8.1 6.7 V10.7 Q7.9 11.8 6.8 12 Q5.6 11.8 5.5 10.7 V6.7 Q1 4.7 1.2 2 Z" stroke="#2e2e2e" stroke-width="1.1" fill="none" stroke-linejoin="round"/></svg>
<div class="a" style="left:60.00px;top:181.00px;width:1.00px;height:433.00px;background:#ebebeb;"></div>
<div class="a" style="left:61.00px;top:183.20px;width:567.60px;height:30.00px;background:#fbe7e7;"></div>
<div class="a" style="left:61.00px;top:183.20px;width:4.00px;height:30.00px;background:#b9372c;"></div>
<div class="a" style="left:76px;top:191.10px;width:12.3px;height:12px;border:1.25px solid #4a4a4a;border-radius:1.8px"></div>
<svg class="a" style="left:95.75px;top:188.1px" width="16" height="16" viewBox="0 0 16 16"><circle cx="8" cy="8" r="7.1" fill="#b9372c"/><path d="M3.9 11.1 H12.1 L11.2 10.1 V7.6 Q11.2 4.4 8 4.1 Q4.8 4.4 4.8 7.6 V10.1 Z" stroke="#fff" stroke-width="0.9" fill="none" stroke-linejoin="round"/><path d="M8 2.8 V4.1" stroke="#fff" stroke-width="0.9" stroke-linecap="round"/><path d="M7 12 Q8 13.6 9 12" stroke="#fff" stroke-width="0.85" fill="none"/></svg>
<div class="t" style="left:163.80px;top:194.00px;font-size:9.8px;color:#3d3d3d;-webkit-text-stroke:0.12px #3d3d3d;transform:scaleX(0.9949);transform-origin:0 0;">06/08/2021-13:30:27:255</div>
<div class="t" style="left:326.80px;top:193.00px;font-size:10.5px;color:#444;-webkit-text-stroke:0.12px #444;transform:scaleX(0.8037);transform-origin:0 0;">SSBLA</div>
<div class="t" style="left:416.70px;top:194.00px;font-size:9.9px;color:#222;-webkit-text-stroke:0.35px #222;transform:scaleX(0.8658);transform-origin:0 0;">DEB</div>
<div class="t" style="left:505.80px;top:195.00px;font-size:10.3px;color:#222;-webkit-text-stroke:0.35px #222;transform:scaleX(0.8218);transform-origin:0 0;">ISOL.DJ</div>
<svg class="a" style="left:615.3px;top:190.0px" width="8" height="18" viewBox="0 0 8 18"><circle cx="4" cy="3.25" r="1.8" fill="none" stroke="#222" stroke-width="1.0"/><circle cx="4" cy="9.00" r="1.8" fill="none" stroke="#222" stroke-width="1.0"/><circle cx="4" cy="14.75" r="1.8" fill="none" stroke="#222" stroke-width="1.0"/></svg>
<div class="a" style="left:61.00px;top:216.50px;width:567.60px;height:30.00px;background:#fde8d1;"></div>
<div class="a" style="left:61.00px;top:216.50px;width:4.00px;height:30.00px;background:#f8a33a;"></div>
<div class="a" style="left:76px;top:224.40px;width:12.3px;height:12px;border:1.25px solid #4a4a4a;border-radius:1.8px"></div>
<svg class="a" style="left:95.75px;top:221.39999999999998px" width="16" height="16" viewBox="0 0 16 16"><circle cx="8" cy="8" r="7.1" fill="#f8a33a"/><path d="M3.9 11.1 H12.1 L11.2 10.1 V7.6 Q11.2 4.4 8 4.1 Q4.8 4.4 4.8 7.6 V10.1 Z" stroke="#fff" stroke-width="0.9" fill="none" stroke-linejoin="round"/><path d="M8 2.8 V4.1" stroke="#fff" stroke-width="0.9" stroke-linecap="round"/><path d="M7 12 Q8 13.6 9 12" stroke="#fff" stroke-width="0.85" fill="none"/></svg>
<div class="t" style="left:163.80px;top:227.00px;font-size:9.8px;color:#3d3d3d;-webkit-text-stroke:0.12px #3d3d3d;transform:scaleX(0.9949);transform-origin:0 0;">06/08/2021-13:30:27:355</div>
<div class="t" style="left:326.80px;top:226.00px;font-size:10.5px;color:#444;-webkit-text-stroke:0.12px #444;transform:scaleX(0.8710);transform-origin:0 0;">BRUNN</div>
<div class="t" style="left:416.70px;top:227.00px;font-size:9.9px;color:#222;-webkit-text-stroke:0.35px #222;transform:scaleX(0.8658);transform-origin:0 0;">DEB</div>
<div class="t" style="left:505.80px;top:229.00px;font-size:10.3px;color:#222;-webkit-text-stroke:0.35px #222;transform:scaleX(0.8666);transform-origin:0 0;">DANGER</div>
<svg class="a" style="left:615.3px;top:223.15px" width="8" height="18" viewBox="0 0 8 18"><circle cx="4" cy="3.25" r="1.8" fill="none" stroke="#222" stroke-width="1.0"/><circle cx="4" cy="9.00" r="1.8" fill="none" stroke="#222" stroke-width="1.0"/><circle cx="4" cy="14.75" r="1.8" fill="none" stroke="#222" stroke-width="1.0"/></svg>
<div class="a" style="left:61.00px;top:249.80px;width:567.60px;height:30.00px;background:#fde8d1;"></div>
<div class="a" style="left:61.00px;top:249.80px;width:4.00px;height:30.00px;background:#f8a33a;"></div>
<div class="a" style="left:76px;top:257.70px;width:12.3px;height:12px;border:1.25px solid #4a4a4a;border-radius:1.8px"></div>
<svg class="a" style="left:95.75px;top:254.7px" width="16" height="16" viewBox="0 0 16 16"><circle cx="8" cy="8" r="7.1" fill="#f8a33a"/><path d="M3.9 11.1 H12.1 L11.2 10.1 V7.6 Q11.2 4.4 8 4.1 Q4.8 4.4 4.8 7.6 V10.1 Z" stroke="#fff" stroke-width="0.9" fill="none" stroke-linejoin="round"/><path d="M8 2.8 V4.1" stroke="#fff" stroke-width="0.9" stroke-linecap="round"/><path d="M7 12 Q8 13.6 9 12" stroke="#fff" stroke-width="0.85" fill="none"/></svg>
<div class="t" style="left:163.80px;top:260.00px;font-size:9.8px;color:#3d3d3d;-webkit-text-stroke:0.12px #3d3d3d;transform:scaleX(0.9949);transform-origin:0 0;">06/08/2021-13:30:27:355</div>
<div class="t" style="left:326.80px;top:259.00px;font-size:10.5px;color:#444;-webkit-text-stroke:0.12px #444;transform:scaleX(0.7564);transform-origin:0 0;">SELES</div>
<div class="t" style="left:416.70px;top:260.00px;font-size:9.9px;color:#222;-webkit-text-stroke:0.35px #222;transform:scaleX(0.8658);transform-origin:0 0;">DEB</div>
<div class="t" style="left:505.80px;top:262.00px;font-size:10.3px;color:#222;-webkit-text-stroke:0.35px #222;transform:scaleX(0.8218);transform-origin:0 0;">ISOL.DJ</div>
<svg class="a" style="left:615.3px;top:256.3px" width="8" height="18" viewBox="0 0 8 18"><circle cx="4" cy="3.25" r="1.8" fill="none" stroke="#222" stroke-width="1.0"/><circle cx="4" cy="9.00" r="1.8" fill="none" stroke="#222" stroke-width="1.0"/><circle cx="4" cy="14.75" r="1.8" fill="none" stroke="#222" stroke-width="1.0"/></svg>
<div class="a" style="left:61.00px;top:283.10px;width:567.60px;height:30.00px;background:#fde8d1;"></div>
<div class="a" style="left:61.00px;top:283.10px;width:4.00px;height:30.00px;background:#f8a33a;"></div>
<div class="a" style="left:76px;top:291.00px;width:12.3px;height:12px;border:1.25px solid #4a4a4a;border-radius:1.8px"></div>
<svg class="a" style="left:95.75px;top:288.0px" width="16" height="16" viewBox="0 0 16 16"><circle cx="8" cy="8" r="7.1" fill="#f8a33a"/><path d="M3.9 11.1 H12.1 L11.2 10.1 V7.6 Q11.2 4.4 8 4.1 Q4.8 4.4 4.8 7.6 V10.1 Z" stroke="#fff" stroke-width="0.9" fill="none" stroke-linejoin="round"/><path d="M8 2.8 V4.1" stroke="#fff" stroke-width="0.9" stroke-linecap="round"/><path d="M7 12 Q8 13.6 9 12" stroke="#fff" stroke-width="0.85" fill="none"/></svg>
<div class="t" style="left:163.80px;top:294.00px;font-size:9.8px;color:#3d3d3d;-webkit-text-stroke:0.12px #3d3d3d;transform:scaleX(0.9949);transform-origin:0 0;">06/08/2021-13:30:27:355</div>
<div class="t" style="left:326.80px;top:293.00px;font-size:10.5px;color:#444;-webkit-text-stroke:0.12px #444;transform:scaleX(0.7564);transform-origin:0 0;">SELES</div>
<div class="t" style="left:416.70px;top:293.00px;font-size:9.9px;color:#222;-webkit-text-stroke:0.35px #222;transform:scaleX(0.8658);transform-origin:0 0;">DEB</div>
<div class="t" style="left:505.80px;top:295.00px;font-size:10.3px;color:#222;-webkit-text-stroke:0.35px #222;transform:scaleX(0.8218);transform-origin:0 0;">ISOL.DJ</div>
<svg class="a" style="left:615.3px;top:289.45px" width="8" height="18" viewBox="0 0 8 18"><circle cx="4" cy="3.25" r="1.8" fill="none" stroke="#222" stroke-width="1.0"/><circle cx="4" cy="9.00" r="1.8" fill="none" stroke="#222" stroke-width="1.0"/><circle cx="4" cy="14.75" r="1.8" fill="none" stroke="#222" stroke-width="1.0"/></svg>
<div class="a" style="left:61.00px;top:315.60px;width:567.60px;height:32.00px;background:#f3f3f3;"></div>
<div class="a" style="left:61.00px;top:316.40px;width:4.00px;height:30.00px;background:#f8a33a;"></div>
<div class="a" style="left:76px;top:324.30px;width:12.3px;height:12px;border:1.25px solid #4a4a4a;border-radius:1.8px"></div>
<svg class="a" style="left:95.4px;top:319.79999999999995px" width="20" height="20" viewBox="0 0 20 20"><circle cx="10" cy="10" r="8.85" fill="none" stroke="#f8a33a" stroke-width="1.3"/><path d="M5.2 12.6 L9.4 8.4 Q8.6 6.2 10.2 4.9 Q11.5 3.9 13 4.3 L11.4 5.9 L11.8 7.1 L13 7.5 L14.6 5.9 Q15 7.5 13.8 8.7 Q12.5 9.8 10.6 9.4 L6.4 13.8 Q5.8 14.3 5.2 13.8 Q4.7 13.2 5.2 12.6 Z" stroke="#f8a33a" stroke-width="0.95" fill="none" stroke-linecap="round" stroke-linejoin="round"/></svg>
<div class="t" style="left:163.80px;top:327.00px;font-size:9.8px;color:#3d3d3d;-webkit-text-stroke:0.12px #3d3d3d;transform:scaleX(0.9949);transform-origin:0 0;">06/08/2021-13:30:02:221</div>
<div class="t" style="left:326.80px;top:326.00px;font-size:10.5px;color:#444;-webkit-text-stroke:0.12px #444;transform:scaleX(0.7564);transform-origin:0 0;">SELES</div>
<div class="a" style="left:411.10px;top:325.22px;width:28.00px;height:10.30px;background:#f6e7ca;"></div>
<div class="a" style="left:503.20px;top:325.52px;width:44.10px;height:10.80px;background:#f6e7ca;"></div>
<div class="t" style="left:416.70px;top:327.00px;font-size:9.9px;color:#222;-webkit-text-stroke:0.35px #222;transform:scaleX(0.8658);transform-origin:0 0;">DEB</div>
<div class="t" style="left:505.80px;top:328.00px;font-size:10.3px;color:#222;-webkit-text-stroke:0.35px #222;transform:scaleX(0.8298);transform-origin:0 0;">FCT.PROT</div>
<svg class="a" style="left:615.3px;top:322.6px" width="8" height="18" viewBox="0 0 8 18"><circle cx="4" cy="3.25" r="1.8" fill="none" stroke="#222" stroke-width="1.0"/><circle cx="4" cy="9.00" r="1.8" fill="none" stroke="#222" stroke-width="1.0"/><circle cx="4" cy="14.75" r="1.8" fill="none" stroke="#222" stroke-width="1.0"/></svg>
<div class="a" style="left:61.00px;top:349.70px;width:4.00px;height:30.00px;background:#3f9f62;"></div>
<div class="a" style="left:76px;top:357.60px;width:12.3px;height:12px;border:1.25px solid #4a4a4a;border-radius:1.8px"></div>
<svg class="a" style="left:95.4px;top:353.1px" width="20" height="20" viewBox="0 0 20 20"><circle cx="10" cy="10" r="8.85" fill="none" stroke="#3f9f62" stroke-width="1.3"/><path d="M5.2 12.6 L9.4 8.4 Q8.6 6.2 10.2 4.9 Q11.5 3.9 13 4.3 L11.4 5.9 L11.8 7.1 L13 7.5 L14.6 5.9 Q15 7.5 13.8 8.7 Q12.5 9.8 10.6 9.4 L6.4 13.8 Q5.8 14.3 5.2 13.8 Q4.7 13.2 5.2 12.6 Z" stroke="#3f9f62" stroke-width="0.95" fill="none" stroke-linecap="round" stroke-linejoin="round"/></svg>
<div class="t" style="left:163.80px;top:360.00px;font-size:9.8px;color:#3d3d3d;-webkit-text-stroke:0.12px #3d3d3d;transform:scaleX(0.9949);transform-origin:0 0;">06/08/2021-13:33:21:453</div>
<div class="t" style="left:326.80px;top:359.00px;font-size:10.5px;color:#444;-webkit-text-stroke:0.12px #444;transform:scaleX(0.7564);transform-origin:0 0;">SELES</div>
<div class="a" style="left:411.10px;top:358.45px;width:28.00px;height:10.30px;background:#d3ecda;"></div>
<div class="a" style="left:503.20px;top:358.75px;width:44.10px;height:10.80px;background:#d3ecda;"></div>
<div class="t" style="left:416.70px;top:360.00px;font-size:9.9px;color:#222;-webkit-text-stroke:0.35px #222;transform:scaleX(0.8658);transform-origin:0 0;">DEB</div>
<div class="t" style="left:505.80px;top:362.00px;font-size:10.3px;color:#222;-webkit-text-stroke:0.35px #222;transform:scaleX(0.8298);transform-origin:0 0;">FCT.PROT</div>
<svg class="a" style="left:615.3px;top:355.75px" width="8" height="18" viewBox="0 0 8 18"><circle cx="4" cy="3.25" r="1.8" fill="none" stroke="#222" stroke-width="1.0"/><circle cx="4" cy="9.00" r="1.8" fill="none" stroke="#222" stroke-width="1.0"/><circle cx="4" cy="14.75" r="1.8" fill="none" stroke="#222" stroke-width="1.0"/></svg>
<div class="a" style="left:61.00px;top:382.20px;width:567.60px;height:32.00px;background:#f3f3f3;"></div>
<div class="a" style="left:61.00px;top:383.00px;width:4.00px;height:30.00px;background:#f8a33a;"></div>
<div class="a" style="left:76px;top:390.90px;width:12.3px;height:12px;border:1.25px solid #4a4a4a;border-radius:1.8px"></div>
<svg class="a" style="left:95.4px;top:386.4px" width="20" height="20" viewBox="0 0 20 20"><circle cx="10" cy="10" r="8.85" fill="none" stroke="#f8a33a" stroke-width="1.3"/><path d="M6.2 11 L8.4 13.3 L14.4 5.6" stroke="#f8a33a" stroke-width="0.95" fill="none" stroke-linecap="round" stroke-linejoin="round"/></svg>
<div class="t" style="left:163.80px;top:393.00px;font-size:9.8px;color:#3d3d3d;-webkit-text-stroke:0.12px #3d3d3d;transform:scaleX(0.9949);transform-origin:0 0;">05/08/2021-16:10:32:432</div>
<div class="t" style="left:326.80px;top:392.00px;font-size:10.5px;color:#444;-webkit-text-stroke:0.12px #444;transform:scaleX(0.8710);transform-origin:0 0;">BRUNN</div>
<div class="a" style="left:411.10px;top:391.68px;width:28.00px;height:10.30px;background:#f6e7ca;"></div>
<div class="a" style="left:503.20px;top:391.98px;width:44.20px;height:10.80px;background:#f6e7ca;"></div>
<div class="t" style="left:416.70px;top:393.00px;font-size:9.9px;color:#222;-webkit-text-stroke:0.35px #222;transform:scaleX(0.8658);transform-origin:0 0;">DEB</div>
<div class="t" style="left:505.80px;top:395.00px;font-size:10.3px;color:#222;-webkit-text-stroke:0.35px #222;transform:scaleX(0.8666);transform-origin:0 0;">DANGER</div>
<svg class="a" style="left:615.3px;top:388.9px" width="8" height="18" viewBox="0 0 8 18"><circle cx="4" cy="3.25" r="1.8" fill="none" stroke="#222" stroke-width="1.0"/><circle cx="4" cy="9.00" r="1.8" fill="none" stroke="#222" stroke-width="1.0"/><circle cx="4" cy="14.75" r="1.8" fill="none" stroke="#222" stroke-width="1.0"/></svg>
<div class="a" style="left:61.00px;top:416.30px;width:4.00px;height:30.00px;background:#f8a33a;"></div>
<div class="a" style="left:76px;top:424.20px;width:12.3px;height:12px;border:1.25px solid #4a4a4a;border-radius:1.8px"></div>
<svg class="a" style="left:95.4px;top:419.69999999999993px" width="20" height="20" viewBox="0 0 20 20"><circle cx="10" cy="10" r="8.85" fill="none" stroke="#f8a33a" stroke-width="1.3"/><path d="M5.2 12.2 L8.4 9 L10.6 10.8 L14.2 7.2 M12 6.8 H14.6 V9.4" stroke="#f8a33a" stroke-width="0.95" fill="none" stroke-linecap="round" stroke-linejoin="round"/></svg>
<div class="t" style="left:163.80px;top:427.00px;font-size:9.8px;color:#3d3d3d;-webkit-text-stroke:0.12px #3d3d3d;transform:scaleX(0.9949);transform-origin:0 0;">05/08/2021-16:10:32:400</div>
<div class="t" style="left:326.80px;top:426.00px;font-size:10.5px;color:#444;-webkit-text-stroke:0.12px #444;transform:scaleX(0.8544);transform-origin:0 0;">GAMBS</div>
<div class="a" style="left:411.10px;top:424.91px;width:28.00px;height:10.30px;background:#fde9d2;"></div>
<div class="a" style="left:503.20px;top:425.21px;width:44.20px;height:10.80px;background:#fde9d2;"></div>
<div class="t" style="left:416.70px;top:426.00px;font-size:9.9px;color:#222;-webkit-text-stroke:0.35px #222;transform:scaleX(0.8658);transform-origin:0 0;">DEB</div>
<div class="t" style="left:505.80px;top:428.00px;font-size:10.3px;color:#222;-webkit-text-stroke:0.35px #222;transform:scaleX(0.8842);transform-origin:0 0;">DF.CONTI</div>
<svg class="a" style="left:615.3px;top:422.04999999999995px" width="8" height="18" viewBox="0 0 8 18"><circle cx="4" cy="3.25" r="1.8" fill="none" stroke="#222" stroke-width="1.0"/><circle cx="4" cy="9.00" r="1.8" fill="none" stroke="#222" stroke-width="1.0"/><circle cx="4" cy="14.75" r="1.8" fill="none" stroke="#222" stroke-width="1.0"/></svg>
<div class="a" style="left:61.00px;top:448.80px;width:567.60px;height:32.00px;background:#f3f3f3;"></div>
<div class="a" style="left:61.00px;top:449.60px;width:4.00px;height:30.00px;background:#a6a6a6;"></div>
<div class="a" style="left:76px;top:457.50px;width:12.3px;height:12px;border:1.25px solid #4a4a4a;border-radius:1.8px"></div>
<svg class="a" style="left:95.4px;top:453.0px" width="20" height="20" viewBox="0 0 20 20"><circle cx="10" cy="10" r="8.85" fill="none" stroke="#a6a6a6" stroke-width="1.3"/><path d="M5.2 12.6 L9.4 8.4 Q8.6 6.2 10.2 4.9 Q11.5 3.9 13 4.3 L11.4 5.9 L11.8 7.1 L13 7.5 L14.6 5.9 Q15 7.5 13.8 8.7 Q12.5 9.8 10.6 9.4 L6.4 13.8 Q5.8 14.3 5.2 13.8 Q4.7 13.2 5.2 12.6 Z" stroke="#a6a6a6" stroke-width="0.95" fill="none" stroke-linecap="round" stroke-linejoin="round"/></svg>
<div class="t" style="left:163.80px;top:460.00px;font-size:9.8px;color:#3d3d3d;-webkit-text-stroke:0.12px #3d3d3d;transform:scaleX(0.9949);transform-origin:0 0;">05/08/2021-16:09:21:432</div>
<div class="t" style="left:326.80px;top:459.00px;font-size:10.5px;color:#1e1e1e;-webkit-text-stroke:0.35px #1e1e1e;transform:scaleX(0.8416);transform-origin:0 0;">BATZE</div>
<div class="a" style="left:411.10px;top:458.14px;width:28.00px;height:10.30px;background:#e1e1e1;"></div>
<div class="a" style="left:504.50px;top:458.44px;width:35.90px;height:10.80px;background:#e1e1e1;"></div>
<div class="t" style="left:416.70px;top:460.00px;font-size:9.9px;color:#222;-webkit-text-stroke:0.35px #222;transform:scaleX(0.8658);transform-origin:0 0;">DEB</div>
<div class="t" style="left:505.80px;top:461.00px;font-size:10.3px;color:#222;-webkit-text-stroke:0.35px #222;transform:scaleX(0.8218);transform-origin:0 0;">ISOL.DJ</div>
<svg class="a" style="left:615.3px;top:455.2px" width="8" height="18" viewBox="0 0 8 18"><circle cx="4" cy="3.25" r="1.8" fill="none" stroke="#222" stroke-width="1.0"/><circle cx="4" cy="9.00" r="1.8" fill="none" stroke="#222" stroke-width="1.0"/><circle cx="4" cy="14.75" r="1.8" fill="none" stroke="#222" stroke-width="1.0"/></svg>
<div class="a" style="left:61.00px;top:482.90px;width:4.00px;height:30.00px;background:#3f9f62;"></div>
<div class="a" style="left:76px;top:490.80px;width:12.3px;height:12px;border:1.25px solid #4a4a4a;border-radius:1.8px"></div>
<svg class="a" style="left:95.4px;top:486.29999999999995px" width="20" height="20" viewBox="0 0 20 20"><circle cx="10" cy="10" r="8.85" fill="none" stroke="#3f9f62" stroke-width="1.3"/><path d="M6.2 11 L8.4 13.3 L14.4 5.6" stroke="#3f9f62" stroke-width="0.95" fill="none" stroke-linecap="round" stroke-linejoin="round"/></svg>
<div class="t" style="left:163.80px;top:493.00px;font-size:9.8px;color:#3d3d3d;-webkit-text-stroke:0.12px #3d3d3d;transform:scaleX(1.0084);transform-origin:0 0;">05/08/2021-15:19:36:111</div>
<div class="t" style="left:326.80px;top:492.00px;font-size:10.5px;color:#444;-webkit-text-stroke:0.12px #444;transform:scaleX(0.8416);transform-origin:0 0;">BATZE</div>
<div class="a" style="left:411.10px;top:491.37px;width:28.00px;height:10.30px;background:#d3ecda;"></div>
<div class="a" style="left:503.20px;top:491.67px;width:44.10px;height:10.80px;background:#d3ecda;"></div>
<div class="t" style="left:416.70px;top:493.00px;font-size:9.9px;color:#222;-webkit-text-stroke:0.35px #222;transform:scaleX(0.8658);transform-origin:0 0;">DEB</div>
<div class="t" style="left:505.80px;top:494.00px;font-size:10.3px;color:#222;-webkit-text-stroke:0.35px #222;transform:scaleX(0.8298);transform-origin:0 0;">FCT.PROT</div>
<svg class="a" style="left:615.3px;top:488.34999999999997px" width="8" height="18" viewBox="0 0 8 18"><circle cx="4" cy="3.25" r="1.8" fill="none" stroke="#222" stroke-width="1.0"/><circle cx="4" cy="9.00" r="1.8" fill="none" stroke="#222" stroke-width="1.0"/><circle cx="4" cy="14.75" r="1.8" fill="none" stroke="#222" stroke-width="1.0"/></svg>
<div class="a" style="left:61.00px;top:515.40px;width:567.60px;height:32.00px;background:#f3f3f3;"></div>
<div class="a" style="left:61.00px;top:516.20px;width:4.00px;height:30.00px;background:#f8a33a;"></div>
<div class="a" style="left:76px;top:524.10px;width:12.3px;height:12px;border:1.25px solid #4a4a4a;border-radius:1.8px"></div>
<svg class="a" style="left:95.4px;top:519.6px" width="20" height="20" viewBox="0 0 20 20"><circle cx="10" cy="10" r="8.85" fill="none" stroke="#f8a33a" stroke-width="1.3"/><path d="M6.2 11 L8.4 13.3 L14.4 5.6" stroke="#f8a33a" stroke-width="0.95" fill="none" stroke-linecap="round" stroke-linejoin="round"/></svg>
<div class="t" style="left:163.80px;top:526.00px;font-size:9.8px;color:#3d3d3d;-webkit-text-stroke:0.12px #3d3d3d;transform:scaleX(1.0084);transform-origin:0 0;">05/08/2021-15:19:36:111</div>
<div class="t" style="left:326.80px;top:525.00px;font-size:10.5px;color:#444;-webkit-text-stroke:0.12px #444;transform:scaleX(0.8416);transform-origin:0 0;">BATZE</div>
<div class="a" style="left:411.10px;top:524.60px;width:28.00px;height:10.30px;background:#f6e7ca;"></div>
<div class="a" style="left:503.20px;top:524.90px;width:44.10px;height:10.80px;background:#f6e7ca;"></div>
<div class="t" style="left:416.70px;top:526.00px;font-size:9.9px;color:#222;-webkit-text-stroke:0.35px #222;transform:scaleX(0.8658);transform-origin:0 0;">DEB</div>
<div class="t" style="left:505.80px;top:528.00px;font-size:10.3px;color:#222;-webkit-text-stroke:0.35px #222;transform:scaleX(0.8298);transform-origin:0 0;">FCT.PROT</div>
<svg class="a" style="left:615.3px;top:521.5px" width="8" height="18" viewBox="0 0 8 18"><circle cx="4" cy="3.25" r="1.8" fill="none" stroke="#222" stroke-width="1.0"/><circle cx="4" cy="9.00" r="1.8" fill="none" stroke="#222" stroke-width="1.0"/><circle cx="4" cy="14.75" r="1.8" fill="none" stroke="#222" stroke-width="1.0"/></svg>
<div class="a" style="left:61.00px;top:549.50px;width:4.00px;height:30.00px;background:#f8a33a;"></div>
<div class="a" style="left:76px;top:557.40px;width:12.3px;height:12px;border:1.25px solid #4a4a4a;border-radius:1.8px"></div>
<svg class="a" style="left:95.4px;top:552.9px" width="20" height="20" viewBox="0 0 20 20"><circle cx="10" cy="10" r="8.85" fill="none" stroke="#f8a33a" stroke-width="1.3"/><path d="M6.2 11 L8.4 13.3 L14.4 5.6" stroke="#f8a33a" stroke-width="0.95" fill="none" stroke-linecap="round" stroke-linejoin="round"/></svg>
<div class="t" style="left:163.80px;top:559.00px;font-size:9.8px;color:#3d3d3d;-webkit-text-stroke:0.12px #3d3d3d;transform:scaleX(1.0084);transform-origin:0 0;">05/08/2021-15:19:36:111</div>
<div class="t" style="left:326.80px;top:558.00px;font-size:10.5px;color:#444;-webkit-text-stroke:0.12px #444;transform:scaleX(0.8416);transform-origin:0 0;">BATZE</div>
<div class="a" style="left:411.10px;top:557.83px;width:28.00px;height:10.30px;background:#fde9d2;"></div>
<div class="a" style="left:503.20px;top:558.13px;width:44.10px;height:10.80px;background:#fde9d2;"></div>
<div class="t" style="left:416.70px;top:559.00px;font-size:9.9px;color:#222;-webkit-text-stroke:0.35px #222;transform:scaleX(0.8658);transform-origin:0 0;">DEB</div>
<div class="t" style="left:505.80px;top:561.00px;font-size:10.3px;color:#222;-webkit-text-stroke:0.35px #222;transform:scaleX(0.8298);transform-origin:0 0;">FCT.PROT</div>
<svg class="a" style="left:615.3px;top:554.65px" width="8" height="18" viewBox="0 0 8 18"><circle cx="4" cy="3.25" r="1.8" fill="none" stroke="#222" stroke-width="1.0"/><circle cx="4" cy="9.00" r="1.8" fill="none" stroke="#222" stroke-width="1.0"/><circle cx="4" cy="14.75" r="1.8" fill="none" stroke="#222" stroke-width="1.0"/></svg>
<div class="a" style="left:61.00px;top:582.00px;width:567.60px;height:30.50px;background:#f3f3f3;"></div>
<div class="a" style="left:61.00px;top:582.80px;width:4.00px;height:30.00px;background:#f8a33a;"></div>
<div class="a" style="left:76px;top:590.70px;width:12.3px;height:12px;border:1.25px solid #4a4a4a;border-radius:1.8px"></div>
<svg class="a" style="left:95.4px;top:586.1999999999999px" width="20" height="20" viewBox="0 0 20 20"><circle cx="10" cy="10" r="8.85" fill="none" stroke="#f8a33a" stroke-width="1.3"/><path d="M6.2 11 L8.4 13.3 L14.4 5.6" stroke="#f8a33a" stroke-width="0.95" fill="none" stroke-linecap="round" stroke-linejoin="round"/></svg>
<div class="t" style="left:163.80px;top:593.00px;font-size:9.8px;color:#3d3d3d;-webkit-text-stroke:0.12px #3d3d3d;transform:scaleX(1.0084);transform-origin:0 0;">05/08/2021-15:19:36:111</div>
<div class="t" style="left:326.80px;top:592.00px;font-size:10.5px;color:#444;-webkit-text-stroke:0.12px #444;transform:scaleX(0.8416);transform-origin:0 0;">BATZE</div>
<div class="a" style="left:411.10px;top:591.06px;width:28.00px;height:10.30px;background:#f6e7ca;"></div>
<div class="a" style="left:503.20px;top:591.36px;width:44.10px;height:10.80px;background:#f6e7ca;"></div>
<div class="t" style="left:416.70px;top:592.00px;font-size:9.9px;color:#222;-webkit-text-stroke:0.35px #222;transform:scaleX(0.8658);transform-origin:0 0;">DEB</div>
<div class="t" style="left:505.80px;top:594.00px;font-size:10.3px;color:#222;-webkit-text-stroke:0.35px #222;transform:scaleX(0.8298);transform-origin:0 0;">FCT.PROT</div>
<svg class="a" style="left:615.3px;top:587.8px" width="8" height="18" viewBox="0 0 8 18"><circle cx="4" cy="3.25" r="1.8" fill="none" stroke="#222" stroke-width="1.0"/><circle cx="4" cy="9.00" r="1.8" fill="none" stroke="#222" stroke-width="1.0"/><circle cx="4" cy="14.75" r="1.8" fill="none" stroke="#222" stroke-width="1.0"/></svg>
<div class="a" style="left:61.00px;top:612.90px;width:568.00px;height:2.00px;background:linear-gradient(#e4e4e4,#f4f4f4);"></div>
<div class="a" style="left:628.60px;top:181.00px;width:1.40px;height:433.00px;background:#ececec;"></div>
<div class="a" style="left:692.00px;top:181.00px;width:1.00px;height:429.00px;background:#e8e8e8;"></div>
<div class="a" style="left:693.00px;top:181.80px;width:569.50px;height:29.90px;background:#f2dede;"></div>
<div class="a" style="left:693.00px;top:181.80px;width:4.00px;height:29.90px;background:#b9372c;"></div>
<svg class="a" style="left:727.2px;top:188.0px" width="16" height="16" viewBox="0 0 16 16"><circle cx="8" cy="8" r="7.9" fill="#b9372c"/><path d="M3.9 11.1 H12.1 L11.2 10.1 V7.6 Q11.2 4.4 8 4.1 Q4.8 4.4 4.8 7.6 V10.1 Z" stroke="#fff" stroke-width="0.9" fill="none" stroke-linejoin="round"/><path d="M8 2.8 V4.1" stroke="#fff" stroke-width="0.9" stroke-linecap="round"/><path d="M7 12 Q8 13.6 9 12" stroke="#fff" stroke-width="0.85" fill="none"/></svg>
<div class="a" style="left:709px;top:190.90px;width:12.3px;height:12px;border:1.25px solid #4a4a4a;border-radius:1.8px"></div>
<div class="t" style="left:796.20px;top:194.00px;font-size:9.8px;color:#3d3d3d;-webkit-text-stroke:0.12px #3d3d3d;transform:scaleX(0.9912);transform-origin:0 0;">06/08/2021-13:30:27:255</div>
<div class="t" style="left:959.80px;top:193.00px;font-size:10.5px;color:#222;-webkit-text-stroke:0.35px #222;transform:scaleX(0.8007);transform-origin:0 0;">SSBLA</div>
<div class="t" style="left:1049.00px;top:194.00px;font-size:9.9px;color:#222;-webkit-text-stroke:0.35px #222;transform:scaleX(0.8658);transform-origin:0 0;">DEB</div>
<div class="t" style="left:1137.60px;top:194.00px;font-size:10.3px;color:#222;-webkit-text-stroke:0.35px #222;transform:scaleX(0.8218);transform-origin:0 0;">ISOL.DJ</div>
<svg class="a" style="left:1249.8px;top:188.2px" width="8" height="18" viewBox="0 0 8 18"><circle cx="4" cy="3.25" r="1.8" fill="none" stroke="#222" stroke-width="1.0"/><circle cx="4" cy="9.00" r="1.8" fill="none" stroke="#222" stroke-width="1.0"/><circle cx="4" cy="14.75" r="1.8" fill="none" stroke="#222" stroke-width="1.0"/></svg>
<div class="a" style="left:693.00px;top:215.10px;width:569.50px;height:29.90px;background:#fde7cc;"></div>
<div class="a" style="left:693.00px;top:215.10px;width:4.00px;height:29.90px;background:#f8a33a;"></div>
<svg class="a" style="left:727.2px;top:221.3px" width="16" height="16" viewBox="0 0 16 16"><circle cx="8" cy="8" r="7.9" fill="#f8a33a"/><path d="M3.9 11.1 H12.1 L11.2 10.1 V7.6 Q11.2 4.4 8 4.1 Q4.8 4.4 4.8 7.6 V10.1 Z" stroke="#fff" stroke-width="0.9" fill="none" stroke-linejoin="round"/><path d="M8 2.8 V4.1" stroke="#fff" stroke-width="0.9" stroke-linecap="round"/><path d="M7 12 Q8 13.6 9 12" stroke="#fff" stroke-width="0.85" fill="none"/></svg>
<div class="a" style="left:709px;top:224.20px;width:12.3px;height:12px;border:1.25px solid #4a4a4a;border-radius:1.8px"></div>
<div class="t" style="left:796.20px;top:227.00px;font-size:9.8px;color:#3d3d3d;-webkit-text-stroke:0.12px #3d3d3d;transform:scaleX(0.9912);transform-origin:0 0;">06/08/2021-13:30:27:355</div>
<div class="t" style="left:959.80px;top:226.00px;font-size:10.5px;color:#222;-webkit-text-stroke:0.35px #222;transform:scaleX(0.9032);transform-origin:0 0;">BRUNN</div>
<div class="t" style="left:1049.00px;top:227.00px;font-size:9.9px;color:#222;-webkit-text-stroke:0.35px #222;transform:scaleX(0.8658);transform-origin:0 0;">DEB</div>
<div class="t" style="left:1137.60px;top:227.00px;font-size:10.3px;color:#222;-webkit-text-stroke:0.35px #222;transform:scaleX(0.8666);transform-origin:0 0;">DANGER</div>
<svg class="a" style="left:1249.8px;top:221.35px" width="8" height="18" viewBox="0 0 8 18"><circle cx="4" cy="3.25" r="1.8" fill="none" stroke="#222" stroke-width="1.0"/><circle cx="4" cy="9.00" r="1.8" fill="none" stroke="#222" stroke-width="1.0"/><circle cx="4" cy="14.75" r="1.8" fill="none" stroke="#222" stroke-width="1.0"/></svg>
<div class="a" style="left:693.00px;top:248.10px;width:569.50px;height:33.30px;background:#f3f3f3;"></div>
<div class="a" style="left:709px;top:257.50px;width:12.3px;height:12px;border:1.25px solid #4a4a4a;border-radius:1.8px"></div>
<div class="t" style="left:796.20px;top:260.00px;font-size:9.8px;color:#3d3d3d;-webkit-text-stroke:0.12px #3d3d3d;transform:scaleX(0.9912);transform-origin:0 0;">06/08/2021-13:30:27:355</div>
<div class="t" style="left:959.80px;top:259.00px;font-size:10.5px;color:#222;-webkit-text-stroke:0.35px #222;transform:scaleX(0.7623);transform-origin:0 0;">SELES</div>
<div class="t" style="left:1049.00px;top:260.00px;font-size:9.9px;color:#222;-webkit-text-stroke:0.35px #222;transform:scaleX(0.8658);transform-origin:0 0;">DEB</div>
<div class="t" style="left:1137.60px;top:260.00px;font-size:10.3px;color:#222;-webkit-text-stroke:0.35px #222;transform:scaleX(0.8577);transform-origin:0 0;">TS.ABCD</div>
<svg class="a" style="left:1249.8px;top:254.5px" width="8" height="18" viewBox="0 0 8 18"><circle cx="4" cy="3.25" r="1.8" fill="none" stroke="#222" stroke-width="1.0"/><circle cx="4" cy="9.00" r="1.8" fill="none" stroke="#222" stroke-width="1.0"/><circle cx="4" cy="14.75" r="1.8" fill="none" stroke="#222" stroke-width="1.0"/></svg>
<div class="a" style="left:709px;top:290.80px;width:12.3px;height:12px;border:1.25px solid #4a4a4a;border-radius:1.8px"></div>
<div class="t" style="left:796.20px;top:294.00px;font-size:9.8px;color:#3d3d3d;-webkit-text-stroke:0.12px #3d3d3d;transform:scaleX(0.9912);transform-origin:0 0;">06/08/2021-13:30:27:355</div>
<div class="t" style="left:959.80px;top:293.00px;font-size:10.5px;color:#222;-webkit-text-stroke:0.35px #222;transform:scaleX(0.7623);transform-origin:0 0;">SELES</div>
<div class="t" style="left:1049.00px;top:293.00px;font-size:9.9px;color:#222;-webkit-text-stroke:0.35px #222;transform:scaleX(0.8658);transform-origin:0 0;">DEB</div>
<div class="t" style="left:1137.60px;top:294.00px;font-size:10.3px;color:#222;-webkit-text-stroke:0.35px #222;transform:scaleX(0.8577);transform-origin:0 0;">TS.ABCD</div>
<svg class="a" style="left:1249.8px;top:287.65px" width="8" height="18" viewBox="0 0 8 18"><circle cx="4" cy="3.25" r="1.8" fill="none" stroke="#222" stroke-width="1.0"/><circle cx="4" cy="9.00" r="1.8" fill="none" stroke="#222" stroke-width="1.0"/><circle cx="4" cy="14.75" r="1.8" fill="none" stroke="#222" stroke-width="1.0"/></svg>
<div class="a" style="left:693.00px;top:314.70px;width:569.50px;height:33.30px;background:#f3f3f3;"></div>
<div class="a" style="left:709px;top:324.10px;width:12.3px;height:12px;border:1.25px solid #4a4a4a;border-radius:1.8px"></div>
<div class="t" style="left:796.20px;top:327.00px;font-size:9.8px;color:#3d3d3d;-webkit-text-stroke:0.12px #3d3d3d;transform:scaleX(0.9912);transform-origin:0 0;">06/08/2021-13:30:02:221</div>
<div class="t" style="left:959.80px;top:326.00px;font-size:10.5px;color:#222;-webkit-text-stroke:0.35px #222;transform:scaleX(0.7623);transform-origin:0 0;">SELES</div>
<div class="t" style="left:1049.00px;top:327.00px;font-size:9.9px;color:#222;-webkit-text-stroke:0.35px #222;transform:scaleX(0.8658);transform-origin:0 0;">DEB</div>
<div class="t" style="left:1137.60px;top:327.00px;font-size:10.3px;color:#222;-webkit-text-stroke:0.35px #222;transform:scaleX(0.8577);transform-origin:0 0;">TS.ABCD</div>
<svg class="a" style="left:1249.8px;top:320.79999999999995px" width="8" height="18" viewBox="0 0 8 18"><circle cx="4" cy="3.25" r="1.8" fill="none" stroke="#222" stroke-width="1.0"/><circle cx="4" cy="9.00" r="1.8" fill="none" stroke="#222" stroke-width="1.0"/><circle cx="4" cy="14.75" r="1.8" fill="none" stroke="#222" stroke-width="1.0"/></svg>
<div class="a" style="left:709px;top:357.40px;width:12.3px;height:12px;border:1.25px solid #4a4a4a;border-radius:1.8px"></div>
<div class="t" style="left:796.20px;top:360.00px;font-size:9.8px;color:#3d3d3d;-webkit-text-stroke:0.12px #3d3d3d;transform:scaleX(0.9912);transform-origin:0 0;">06/08/2021-13:33:21:453</div>
<div class="t" style="left:959.80px;top:359.00px;font-size:10.5px;color:#222;-webkit-text-stroke:0.35px #222;transform:scaleX(0.7623);transform-origin:0 0;">SELES</div>
<div class="t" style="left:1049.00px;top:360.00px;font-size:9.9px;color:#222;-webkit-text-stroke:0.35px #222;transform:scaleX(0.8658);transform-origin:0 0;">DEB</div>
<div class="t" style="left:1137.60px;top:360.00px;font-size:10.3px;color:#222;-webkit-text-stroke:0.35px #222;transform:scaleX(0.8577);transform-origin:0 0;">TS.ABCD</div>
<svg class="a" style="left:1249.8px;top:353.95px" width="8" height="18" viewBox="0 0 8 18"><circle cx="4" cy="3.25" r="1.8" fill="none" stroke="#222" stroke-width="1.0"/><circle cx="4" cy="9.00" r="1.8" fill="none" stroke="#222" stroke-width="1.0"/><circle cx="4" cy="14.75" r="1.8" fill="none" stroke="#222" stroke-width="1.0"/></svg>
<div class="a" style="left:693.00px;top:381.30px;width:569.50px;height:33.30px;background:#f3f3f3;"></div>
<div class="a" style="left:709px;top:390.70px;width:12.3px;height:12px;border:1.25px solid #4a4a4a;border-radius:1.8px"></div>
<div class="t" style="left:796.20px;top:393.00px;font-size:9.8px;color:#3d3d3d;-webkit-text-stroke:0.12px #3d3d3d;transform:scaleX(0.9912);transform-origin:0 0;">05/08/2021-16:10:32:432</div>
<div class="t" style="left:959.80px;top:392.00px;font-size:10.5px;color:#222;-webkit-text-stroke:0.35px #222;transform:scaleX(0.9032);transform-origin:0 0;">BRUNN</div>
<div class="t" style="left:1049.00px;top:393.00px;font-size:9.9px;color:#222;-webkit-text-stroke:0.35px #222;transform:scaleX(0.8658);transform-origin:0 0;">DEB</div>
<div class="t" style="left:1137.60px;top:393.00px;font-size:10.3px;color:#222;-webkit-text-stroke:0.35px #222;transform:scaleX(0.8577);transform-origin:0 0;">TS.ABCD</div>
<svg class="a" style="left:1249.8px;top:387.09999999999997px" width="8" height="18" viewBox="0 0 8 18"><circle cx="4" cy="3.25" r="1.8" fill="none" stroke="#222" stroke-width="1.0"/><circle cx="4" cy="9.00" r="1.8" fill="none" stroke="#222" stroke-width="1.0"/><circle cx="4" cy="14.75" r="1.8" fill="none" stroke="#222" stroke-width="1.0"/></svg>
<div class="a" style="left:709px;top:424.00px;width:12.3px;height:12px;border:1.25px solid #4a4a4a;border-radius:1.8px"></div>
<div class="t" style="left:796.20px;top:427.00px;font-size:9.8px;color:#3d3d3d;-webkit-text-stroke:0.12px #3d3d3d;transform:scaleX(0.9912);transform-origin:0 0;">05/08/2021-16:10:32:400</div>
<div class="t" style="left:959.80px;top:426.00px;font-size:10.5px;color:#222;-webkit-text-stroke:0.35px #222;transform:scaleX(0.8834);transform-origin:0 0;">GAMBS</div>
<div class="t" style="left:1049.00px;top:426.00px;font-size:9.9px;color:#222;-webkit-text-stroke:0.35px #222;transform:scaleX(0.8658);transform-origin:0 0;">DEB</div>
<div class="t" style="left:1137.60px;top:427.00px;font-size:10.3px;color:#222;-webkit-text-stroke:0.35px #222;transform:scaleX(0.8577);transform-origin:0 0;">TS.ABCD</div>
<svg class="a" style="left:1249.8px;top:420.25px" width="8" height="18" viewBox="0 0 8 18"><circle cx="4" cy="3.25" r="1.8" fill="none" stroke="#222" stroke-width="1.0"/><circle cx="4" cy="9.00" r="1.8" fill="none" stroke="#222" stroke-width="1.0"/><circle cx="4" cy="14.75" r="1.8" fill="none" stroke="#222" stroke-width="1.0"/></svg>
<div class="a" style="left:693.00px;top:447.90px;width:569.50px;height:33.30px;background:#f3f3f3;"></div>
<div class="a" style="left:709px;top:457.30px;width:12.3px;height:12px;border:1.25px solid #4a4a4a;border-radius:1.8px"></div>
<div class="t" style="left:796.20px;top:460.00px;font-size:9.8px;color:#3d3d3d;-webkit-text-stroke:0.12px #3d3d3d;transform:scaleX(0.9912);transform-origin:0 0;">05/08/2021-16:09:21:432</div>
<div class="t" style="left:959.80px;top:459.00px;font-size:10.5px;color:#222;-webkit-text-stroke:0.35px #222;transform:scaleX(0.8356);transform-origin:0 0;">BATZE</div>
<div class="t" style="left:1049.00px;top:460.00px;font-size:9.9px;color:#222;-webkit-text-stroke:0.35px #222;transform:scaleX(0.8658);transform-origin:0 0;">DEB</div>
<div class="t" style="left:1137.60px;top:460.00px;font-size:10.3px;color:#222;-webkit-text-stroke:0.35px #222;transform:scaleX(0.8577);transform-origin:0 0;">TS.ABCD</div>
<svg class="a" style="left:1249.8px;top:453.4px" width="8" height="18" viewBox="0 0 8 18"><circle cx="4" cy="3.25" r="1.8" fill="none" stroke="#222" stroke-width="1.0"/><circle cx="4" cy="9.00" r="1.8" fill="none" stroke="#222" stroke-width="1.0"/><circle cx="4" cy="14.75" r="1.8" fill="none" stroke="#222" stroke-width="1.0"/></svg>
<div class="a" style="left:709px;top:490.60px;width:12.3px;height:12px;border:1.25px solid #4a4a4a;border-radius:1.8px"></div>
<div class="t" style="left:796.20px;top:493.00px;font-size:9.8px;color:#3d3d3d;-webkit-text-stroke:0.12px #3d3d3d;">05/08/2021-15:19:36:111</div>
<div class="t" style="left:959.80px;top:492.00px;font-size:10.5px;color:#222;-webkit-text-stroke:0.35px #222;transform:scaleX(0.8356);transform-origin:0 0;">BATZE</div>
<div class="t" style="left:1049.00px;top:493.00px;font-size:9.9px;color:#222;-webkit-text-stroke:0.35px #222;transform:scaleX(0.8658);transform-origin:0 0;">DEB</div>
<div class="t" style="left:1137.60px;top:493.00px;font-size:10.3px;color:#222;-webkit-text-stroke:0.35px #222;transform:scaleX(0.8577);transform-origin:0 0;">TS.ABCD</div>
<svg class="a" style="left:1249.8px;top:486.54999999999995px" width="8" height="18" viewBox="0 0 8 18"><circle cx="4" cy="3.25" r="1.8" fill="none" stroke="#222" stroke-width="1.0"/><circle cx="4" cy="9.00" r="1.8" fill="none" stroke="#222" stroke-width="1.0"/><circle cx="4" cy="14.75" r="1.8" fill="none" stroke="#222" stroke-width="1.0"/></svg>
<div class="a" style="left:693.00px;top:514.50px;width:569.50px;height:33.30px;background:#f3f3f3;"></div>
<div class="a" style="left:709px;top:523.90px;width:12.3px;height:12px;border:1.25px solid #4a4a4a;border-radius:1.8px"></div>
<div class="t" style="left:796.20px;top:526.00px;font-size:9.8px;color:#3d3d3d;-webkit-text-stroke:0.12px #3d3d3d;">05/08/2021-15:19:36:111</div>
<div class="t" style="left:959.80px;top:525.00px;font-size:10.5px;color:#222;-webkit-text-stroke:0.35px #222;transform:scaleX(0.8356);transform-origin:0 0;">BATZE</div>
<div class="t" style="left:1049.00px;top:526.00px;font-size:9.9px;color:#222;-webkit-text-stroke:0.35px #222;transform:scaleX(0.8658);transform-origin:0 0;">DEB</div>
<div class="t" style="left:1137.60px;top:526.00px;font-size:10.3px;color:#222;-webkit-text-stroke:0.35px #222;transform:scaleX(0.8577);transform-origin:0 0;">TS.ABCD</div>
<svg class="a" style="left:1249.8px;top:519.7px" width="8" height="18" viewBox="0 0 8 18"><circle cx="4" cy="3.25" r="1.8" fill="none" stroke="#222" stroke-width="1.0"/><circle cx="4" cy="9.00" r="1.8" fill="none" stroke="#222" stroke-width="1.0"/><circle cx="4" cy="14.75" r="1.8" fill="none" stroke="#222" stroke-width="1.0"/></svg>
<div class="a" style="left:709px;top:557.20px;width:12.3px;height:12px;border:1.25px solid #4a4a4a;border-radius:1.8px"></div>
<div class="t" style="left:796.20px;top:559.00px;font-size:9.8px;color:#3d3d3d;-webkit-text-stroke:0.12px #3d3d3d;">05/08/2021-15:19:36:111</div>
<div class="t" style="left:959.80px;top:558.00px;font-size:10.5px;color:#222;-webkit-text-stroke:0.35px #222;transform:scaleX(0.8356);transform-origin:0 0;">BATZE</div>
<div class="t" style="left:1049.00px;top:559.00px;font-size:9.9px;color:#222;-webkit-text-stroke:0.35px #222;transform:scaleX(0.8658);transform-origin:0 0;">DEB</div>
<div class="t" style="left:1137.60px;top:559.00px;font-size:10.3px;color:#222;-webkit-text-stroke:0.35px #222;transform:scaleX(0.8577);transform-origin:0 0;">TS.ABCD</div>
<svg class="a" style="left:1249.8px;top:552.8499999999999px" width="8" height="18" viewBox="0 0 8 18"><circle cx="4" cy="3.25" r="1.8" fill="none" stroke="#222" stroke-width="1.0"/><circle cx="4" cy="9.00" r="1.8" fill="none" stroke="#222" stroke-width="1.0"/><circle cx="4" cy="14.75" r="1.8" fill="none" stroke="#222" stroke-width="1.0"/></svg>
<div class="a" style="left:693.00px;top:581.10px;width:569.50px;height:29.00px;background:#f3f3f3;"></div>
<div class="a" style="left:709px;top:590.50px;width:12.3px;height:12px;border:1.25px solid #4a4a4a;border-radius:1.8px"></div>
<div class="t" style="left:796.20px;top:593.00px;font-size:9.8px;color:#3d3d3d;-webkit-text-stroke:0.12px #3d3d3d;">05/08/2021-15:19:36:111</div>
<div class="t" style="left:959.80px;top:592.00px;font-size:10.5px;color:#222;-webkit-text-stroke:0.35px #222;transform:scaleX(0.8356);transform-origin:0 0;">BATZE</div>
<div class="t" style="left:1049.00px;top:593.00px;font-size:9.9px;color:#222;-webkit-text-stroke:0.35px #222;transform:scaleX(0.8658);transform-origin:0 0;">DEB</div>
<div class="t" style="left:1137.60px;top:593.00px;font-size:10.3px;color:#222;-webkit-text-stroke:0.35px #222;transform:scaleX(0.8577);transform-origin:0 0;">TS.ABCD</div>
<svg class="a" style="left:1249.8px;top:586.0px" width="8" height="18" viewBox="0 0 8 18"><circle cx="4" cy="3.25" r="1.8" fill="none" stroke="#222" stroke-width="1.0"/><circle cx="4" cy="9.00" r="1.8" fill="none" stroke="#222" stroke-width="1.0"/><circle cx="4" cy="14.75" r="1.8" fill="none" stroke="#222" stroke-width="1.0"/></svg>
<div class="a" style="left:693.00px;top:610.10px;width:569.50px;height:4.50px;background:linear-gradient(#ececec,#f7f7f7);"></div>
<div class="a" style="left:1262.20px;top:181.00px;width:1.40px;height:429.00px;background:#ececec;"></div></body></html>
